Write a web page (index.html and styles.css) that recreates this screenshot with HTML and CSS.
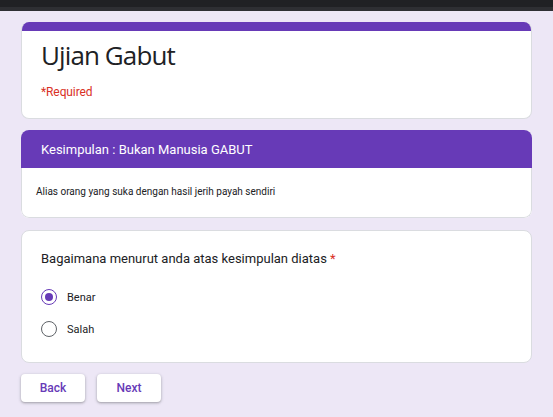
FILE: index.html
```html
<!DOCTYPE html>
<html lang="id">
<head>
<meta charset="utf-8">
<title>Ujian Gabut</title>
<link rel="stylesheet" href="styles.css">
</head>
<body>
<div class="topbar"><div class="topbar-main"></div><div class="topbar-edge"></div></div>
<main class="form">
  <section class="card title-card">
    <div class="accent"></div>
    <div class="title-body">
      <h1 class="form-title">Ujian Gabut</h1>
      <div class="required-note">*Required</div>
    </div>
  </section>

  <section class="card section-card">
    <div class="section-head">Kesimpulan : Bukan Manusia GABUT</div>
    <div class="section-desc">Alias orang yang suka dengan hasil jerih payah sendiri</div>
  </section>

  <section class="card question-card">
    <div class="question">Bagaimana menurut anda atas kesimpulan diatas <span class="star">*</span></div>
    <div class="options">
      <label class="option">
        <span class="radio checked"><span class="dot"></span></span>
        <span class="option-label">Benar</span>
      </label>
      <label class="option">
        <span class="radio"></span>
        <span class="option-label">Salah</span>
      </label>
    </div>
  </section>

  <div class="nav">
    <button class="btn">Back</button>
    <button class="btn">Next</button>
  </div>
</main>
</body>
</html>
```
FILE: styles.css
```css
* { box-sizing: border-box; }
html, body { margin: 0; padding: 0; }
body {
  background: #ede7f6;
  font-family: Roboto, "Liberation Sans", sans-serif;
  color: #202124;
  height: 417px;
  overflow: hidden;
}
.topbar-main { height: 7px; background: #202124; }
.topbar-edge { height: 4px; background: #2e2f33; }

.form {
  padding: 11px 21px 0;
  display: flex;
  flex-direction: column;
}
.card {
  background: #fff;
  border: 1px solid #dadce0;
  border-radius: 8px;
  overflow: hidden;
}
.title-card { border-top: none; }
.accent { height: 9px; background: #673ab7; }
.title-body { padding: 8px 19px 18px; }
.form-title {
  margin: 0;
  font-family: "Open Sans", sans-serif;
  font-weight: 400;
  font-size: 26px;
  line-height: 32px;
  letter-spacing: -0.9px;
  color: #202124;
}
.required-note {
  margin-top: 13px;
  font-size: 12px;
  line-height: 16px;
  color: #d93025;
  letter-spacing: -0.1px;
}

.section-card { margin-top: 11px; border: none; }
.section-head {
  height: 38px;
  display: flex;
  align-items: center;
  padding-left: 20px;
  background: #673ab7;
  color: #fff;
  font-size: 13px;
  font-weight: 400;
}
.section-desc {
  border: 1px solid #dadce0;
  border-top: none;
  border-radius: 0 0 8px 8px;
  height: 50px;
  padding: 17px 14px 0;
  font-size: 10px;
  line-height: 14px;
}

.question-card {
  margin-top: 12px;
  height: 133px;
  padding: 18px 19px 0;
}
.question {
  font-size: 13px;
  line-height: 20px;
}
.star { color: #d93025; }
.options {
  margin-top: 18px;
  display: flex;
  flex-direction: column;
  gap: 12px;
}
.option {
  display: flex;
  align-items: center;
  height: 20px;
}
.radio {
  width: 16px;
  height: 16px;
  border-radius: 50%;
  border: 1.5px solid #5f6368;
  display: flex;
  align-items: center;
  justify-content: center;
}
.radio.checked { border-color: #673ab7; }
.dot {
  width: 8px;
  height: 8px;
  border-radius: 50%;
  background: #673ab7;
}
.option-label {
  margin-left: 10px;
  font-size: 11px;
}

.nav {
  margin-top: 11px;
  display: flex;
  gap: 12px;
}
.btn {
  width: 64px;
  height: 28px;
  border: none;
  border-radius: 4px;
  background: #fff;
  box-shadow: 0 1px 2px rgba(60,64,67,.3), 0 1px 3px 1px rgba(60,64,67,.12);
  color: #673ab7;
  font-family: Roboto, sans-serif;
  font-size: 12px;
  font-weight: 500;
  padding: 0;
}
```
